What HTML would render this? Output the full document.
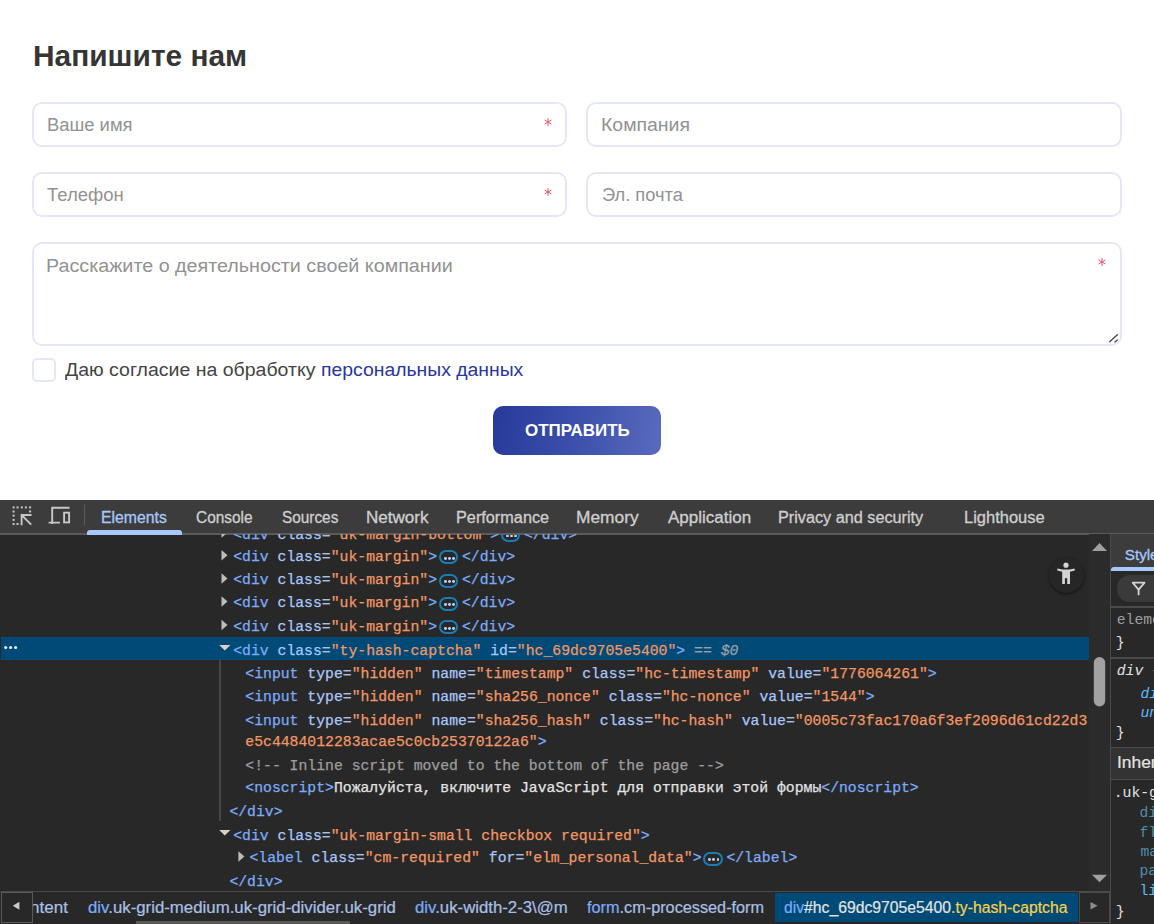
<!DOCTYPE html><html><head><meta charset="utf-8"><style>
*{margin:0;padding:0;box-sizing:content-box}
html,body{width:1154px;height:924px;overflow:hidden;background:#fff;position:relative}
.abs{position:absolute}
.box{position:absolute;border:2px solid #e5e7f6;border-radius:10px;background:#fff;box-sizing:border-box}
.ast{position:absolute}
.t{position:absolute;white-space:pre;line-height:1;transform-origin:0 0}
.code{position:absolute;white-space:pre;-webkit-text-stroke:0.25px currentColor;font-family:'Liberation Mono',monospace;font-size:14.78px;line-height:1;color:#a8c7fa}
.ell{display:inline-block;position:relative;width:19.6px;height:14.2px;border:2px solid #1a7db5;border-radius:7.5px;margin:0 3.6px 0 1.7px;vertical-align:-3.3px;box-sizing:border-box;-webkit-text-stroke:0}
.ell i{position:absolute;top:4.9px;width:2.9px;height:2.9px;border-radius:50%;background:#bcd2f8}
.ell i:nth-child(1){left:3.05px}.ell i:nth-child(2){left:7.25px}.ell i:nth-child(3){left:11.35px}
</style></head><body>
<div class="box" style="left:32px;top:102px;width:535px;height:45px"></div>
<div class="box" style="left:586px;top:102px;width:536px;height:45px"></div>
<div class="box" style="left:32px;top:172px;width:535px;height:45px"></div>
<div class="box" style="left:586px;top:172px;width:536px;height:45px"></div>
<div class="box" style="left:32px;top:242px;width:1090px;height:104px"></div>
<svg class="ast" style="left:542.7px;top:117px" width="10" height="10" viewBox="0 0 10 10"><g stroke="#e24a58" stroke-width="0.9" stroke-linecap="round"><line x1="5" y1="1.4" x2="5" y2="8.6"/><line x1="1.9" y1="3.2" x2="8.1" y2="6.8"/><line x1="1.9" y1="6.8" x2="8.1" y2="3.2"/></g></svg>
<svg class="ast" style="left:542.7px;top:187px" width="10" height="10" viewBox="0 0 10 10"><g stroke="#e24a58" stroke-width="0.9" stroke-linecap="round"><line x1="5" y1="1.4" x2="5" y2="8.6"/><line x1="1.9" y1="3.2" x2="8.1" y2="6.8"/><line x1="1.9" y1="6.8" x2="8.1" y2="3.2"/></g></svg>
<svg class="ast" style="left:1096.6px;top:257.3px" width="10" height="10" viewBox="0 0 10 10"><g stroke="#e24a58" stroke-width="0.9" stroke-linecap="round"><line x1="5" y1="1.4" x2="5" y2="8.6"/><line x1="1.9" y1="3.2" x2="8.1" y2="6.8"/><line x1="1.9" y1="6.8" x2="8.1" y2="3.2"/></g></svg>
<svg class="abs" style="left:1106px;top:332px" width="14" height="12" viewBox="0 0 14 12"><g stroke="#444" stroke-width="1.3" stroke-linecap="round"><line x1="3.7" y1="9.8" x2="11.3" y2="2.7"/><line x1="8.9" y1="10" x2="11.3" y2="7.9"/></g></svg>
<div class="abs" style="left:32px;top:358px;width:20px;height:20px;border:2px solid #e5e7f6;border-radius:5px;background:#fff"></div>
<div class="abs" style="left:493px;top:406px;width:168px;height:49px;border-radius:10px;background:linear-gradient(100deg,#28399a 0%,#3f52ad 55%,#5a6bbd 100%)"></div>
<div class="abs" style="left:0;top:500px;width:1154px;height:424px;background:#282828"></div>
<div class="abs" style="left:0;top:500px;width:1154px;height:33px;background:#3c3c3c"></div>
<div class="abs" style="left:0;top:533px;width:1154px;height:1.7px;background:#5b5b5b"></div>
<svg class="abs" style="left:0;top:500px" width="100" height="34" viewBox="0 500 100 34"><rect x="12.6" y="506.4" width="2" height="2" fill="#c7c7c7"/><rect x="16.5" y="506.4" width="2" height="2" fill="#c7c7c7"/><rect x="20.8" y="506.4" width="2" height="2" fill="#c7c7c7"/><rect x="24.9" y="506.4" width="2" height="2" fill="#c7c7c7"/><rect x="29.1" y="506.4" width="2" height="2" fill="#c7c7c7"/><rect x="12.6" y="510.5" width="2" height="2" fill="#c7c7c7"/><rect x="29.1" y="510.5" width="2" height="2" fill="#c7c7c7"/><rect x="12.6" y="514.6" width="2" height="2" fill="#c7c7c7"/><rect x="12.6" y="518.9" width="2" height="2" fill="#c7c7c7"/><rect x="12.6" y="523" width="2" height="2" fill="#c7c7c7"/><rect x="16.5" y="523" width="2" height="2" fill="#c7c7c7"/><g stroke="#c7c7c7" stroke-width="1.9" fill="none" stroke-linecap="square"><path d="M21.6 515 H30.6 M21.6 515 V524.2 M21.8 515.2 L30.5 523.9"/><path d="M52.2 523 V507.8 H68.6 M49.6 522.6 H59"/><rect x="64.1" y="512.7" width="5" height="9.7" stroke-linecap="butt"/></g><rect x="84.1" y="504.5" width="1" height="21" fill="#5e5e5e"/></svg>
<div class="abs" style="left:87px;top:529.7px;width:95px;height:5px;background:#a8c7fa;border-radius:3px 3px 0 0"></div>
<div class="abs" style="left:1089px;top:534px;width:21px;height:357px;background:#2b2b2b"></div>
<svg class="abs" style="left:1089px;top:534px" width="21" height="357" viewBox="1089 534 21 357"><path d="M1092 551 L1099.5 543 L1107 551 Z" fill="#a0a0a0"/><rect x="1093.8" y="657" width="11.4" height="49.5" rx="5.7" fill="#a2a2a2"/><path d="M1092 874.7 L1107 874.7 L1099.5 882.3 Z" fill="#a0a0a0"/></svg>
<div class="abs" style="left:1110px;top:534px;width:1px;height:390px;background:#4a4a4a"></div>
<div class="abs" style="left:1111px;top:534px;width:43px;height:37px;background:#3c3c3c"></div>
<div class="abs" style="left:1111px;top:567px;width:43px;height:4px;background:#a8c7fa;border-radius:3px 0 0 0"></div>
<div class="abs" style="left:1117.4px;top:575.2px;width:60px;height:26.5px;background:#3a3a3a;border-radius:13px"></div>
<svg class="abs" style="left:1128px;top:578px" width="22" height="20" viewBox="1128 578 22 20"><path d="M1132.6 582.6 H1144.6 L1138.6 589.6 Z" fill="none" stroke="#d4d4d4" stroke-width="1.7" stroke-linejoin="round"/><path d="M1138.6 589 V594.4" stroke="#d4d4d4" stroke-width="1.8" stroke-linecap="round"/></svg>
<div class="abs" style="left:1111px;top:606px;width:43px;height:1.6px;background:#4a4a4a"></div>
<div class="abs" style="left:1111px;top:657px;width:43px;height:1.5px;background:#4a4a4a"></div>
<div class="abs" style="left:1111px;top:747px;width:43px;height:30.5px;background:#333333;border-top:1px solid #4a4a4a;border-bottom:1px solid #4a4a4a"></div>
<div class="abs" style="left:1048.5px;top:558px;width:35px;height:35px;border-radius:50%;background:#262626;box-shadow:0 1px 3px rgba(0,0,0,.6)"></div>
<svg class="abs" style="left:1050px;top:558px" width="32" height="32" viewBox="1050 558 32 32"><circle cx="1066" cy="565.2" r="2.6" fill="#d4d4d4"/><path d="M1057.4 568.6 L1062.3 569.6 H1069.8 L1074.6 568.6 L1074.8 570.6 L1070 571.8 V584 H1067.2 V578.2 H1064.9 V584 H1062.2 V571.8 L1057.3 570.6 Z" fill="#d4d4d4"/></svg>
<div class="abs" style="left:1px;top:636.7px;width:1088px;height:23.5px;background:#004a77"></div>
<svg class="abs" style="left:0;top:640px" width="24" height="16"><circle cx="5.7" cy="7.5" r="1.6" fill="#e8e8e8"/><circle cx="10.6" cy="7.5" r="1.6" fill="#e8e8e8"/><circle cx="15.6" cy="7.5" r="1.6" fill="#e8e8e8"/></svg>
<div class="abs" style="left:219.3px;top:660px;width:1.3px;height:161px;background:#474747"></div>
<div class="abs" style="left:0;top:534px;width:1089px;height:357px;overflow:hidden"><div class="code" style="left:233.20px;top:-6.41px"><span style="color:#7cacf8">&lt;div</span> <span style="color:#a8c7fa">class</span><span style="color:#a9bfe0">=</span><span style="color:#f29766">"uk-margin-bottom"</span><span style="color:#7cacf8">&gt;</span><span class="ell"><i></i><i></i><i></i></span><span style="color:#7cacf8">&lt;/div&gt;</span></div><div class="code" style="left:233.20px;top:16.19px"><span style="color:#7cacf8">&lt;div</span> <span style="color:#a8c7fa">class</span><span style="color:#a9bfe0">=</span><span style="color:#f29766">"uk-margin"</span><span style="color:#7cacf8">&gt;</span><span class="ell"><i></i><i></i><i></i></span><span style="color:#7cacf8">&lt;/div&gt;</span></div><div class="code" style="left:233.20px;top:39.49px"><span style="color:#7cacf8">&lt;div</span> <span style="color:#a8c7fa">class</span><span style="color:#a9bfe0">=</span><span style="color:#f29766">"uk-margin"</span><span style="color:#7cacf8">&gt;</span><span class="ell"><i></i><i></i><i></i></span><span style="color:#7cacf8">&lt;/div&gt;</span></div><div class="code" style="left:233.20px;top:62.49px"><span style="color:#7cacf8">&lt;div</span> <span style="color:#a8c7fa">class</span><span style="color:#a9bfe0">=</span><span style="color:#f29766">"uk-margin"</span><span style="color:#7cacf8">&gt;</span><span class="ell"><i></i><i></i><i></i></span><span style="color:#7cacf8">&lt;/div&gt;</span></div><div class="code" style="left:233.20px;top:85.99px"><span style="color:#7cacf8">&lt;div</span> <span style="color:#a8c7fa">class</span><span style="color:#a9bfe0">=</span><span style="color:#f29766">"uk-margin"</span><span style="color:#7cacf8">&gt;</span><span class="ell"><i></i><i></i><i></i></span><span style="color:#7cacf8">&lt;/div&gt;</span></div><div class="code" style="left:233.20px;top:109.69px"><span style="color:#7cacf8">&lt;div</span> <span style="color:#a8c7fa">class</span><span style="color:#a9bfe0">=</span><span style="color:#f29766">"ty-hash-captcha"</span> <span style="color:#a8c7fa">id</span><span style="color:#a9bfe0">=</span><span style="color:#f29766">"hc_69dc9705e5400"</span><span style="color:#7cacf8">&gt;</span><span style="color:#9aa0a6;font-style:italic"> == $0</span></div><div class="code" style="left:245.30px;top:132.79px"><span style="color:#7cacf8">&lt;input</span> <span style="color:#a8c7fa">type</span><span style="color:#a9bfe0">=</span><span style="color:#f29766">"hidden"</span> <span style="color:#a8c7fa">name</span><span style="color:#a9bfe0">=</span><span style="color:#f29766">"timestamp"</span> <span style="color:#a8c7fa">class</span><span style="color:#a9bfe0">=</span><span style="color:#f29766">"hc-timestamp"</span> <span style="color:#a8c7fa">value</span><span style="color:#a9bfe0">=</span><span style="color:#f29766">"1776064261"</span><span style="color:#7cacf8">&gt;</span></div><div class="code" style="left:245.30px;top:155.99px"><span style="color:#7cacf8">&lt;input</span> <span style="color:#a8c7fa">type</span><span style="color:#a9bfe0">=</span><span style="color:#f29766">"hidden"</span> <span style="color:#a8c7fa">name</span><span style="color:#a9bfe0">=</span><span style="color:#f29766">"sha256_nonce"</span> <span style="color:#a8c7fa">class</span><span style="color:#a9bfe0">=</span><span style="color:#f29766">"hc-nonce"</span> <span style="color:#a8c7fa">value</span><span style="color:#a9bfe0">=</span><span style="color:#f29766">"1544"</span><span style="color:#7cacf8">&gt;</span></div><div class="code" style="left:245.30px;top:179.79px"><span style="color:#7cacf8">&lt;input</span> <span style="color:#a8c7fa">type</span><span style="color:#a9bfe0">=</span><span style="color:#f29766">"hidden"</span> <span style="color:#a8c7fa">name</span><span style="color:#a9bfe0">=</span><span style="color:#f29766">"sha256_hash"</span> <span style="color:#a8c7fa">class</span><span style="color:#a9bfe0">=</span><span style="color:#f29766">"hc-hash"</span> <span style="color:#a8c7fa">value</span><span style="color:#a9bfe0">=</span><span style="color:#f29766">"0005c73fac170a6f3ef2096d61cd22d3</span></div><div class="code" style="left:245.30px;top:201.39px"><span style="color:#f29766">e5c4484012283acae5c0cb25370122a6"</span><span style="color:#7cacf8">&gt;</span></div><div class="code" style="left:245.30px;top:224.59px"><span style="color:#9e9e9e">&lt;!-- Inline script moved to the bottom of the page --&gt;</span></div><div class="code" style="left:245.30px;top:247.29px"><span style="color:#7cacf8">&lt;noscript&gt;</span><span style="color:#e3e3e3">Пожалуйста, включите JavaScript для отправки этой формы</span><span style="color:#7cacf8">&lt;/noscript&gt;</span></div><div class="code" style="left:229.40px;top:271.19px"><span style="color:#7cacf8">&lt;/div&gt;</span></div><div class="code" style="left:233.20px;top:294.69px"><span style="color:#7cacf8">&lt;div</span> <span style="color:#a8c7fa">class</span><span style="color:#a9bfe0">=</span><span style="color:#f29766">"uk-margin-small checkbox required"</span><span style="color:#7cacf8">&gt;</span></div><div class="code" style="left:249.50px;top:317.49px"><span style="color:#7cacf8">&lt;label</span> <span style="color:#a8c7fa">class</span><span style="color:#a9bfe0">=</span><span style="color:#f29766">"cm-required"</span> <span style="color:#a8c7fa">for</span><span style="color:#a9bfe0">=</span><span style="color:#f29766">"elm_personal_data"</span><span style="color:#7cacf8">&gt;</span><span class="ell"><i></i><i></i><i></i></span><span style="color:#7cacf8">&lt;/label&gt;</span></div><div class="code" style="left:229.40px;top:341.09px"><span style="color:#7cacf8">&lt;/div&gt;</span></div></div>
<svg class="abs" style="left:0;top:534px" width="260" height="357" viewBox="0 534 260 357"><path d="M221.5 527.40 L227.5 532.60 L221.5 537.80 Z" fill="#bdbdbd"/><path d="M221.5 550.00 L227.5 555.20 L221.5 560.40 Z" fill="#bdbdbd"/><path d="M221.5 573.30 L227.5 578.50 L221.5 583.70 Z" fill="#bdbdbd"/><path d="M221.5 596.30 L227.5 601.50 L221.5 606.70 Z" fill="#bdbdbd"/><path d="M221.5 619.80 L227.5 625.00 L221.5 630.20 Z" fill="#bdbdbd"/><path d="M238.4 851.30 L244.4 856.50 L238.4 861.70 Z" fill="#bdbdbd"/><path d="M219.2 644.90 L230.4 644.90 L224.8 650.50 Z" fill="#d9d0c8"/><path d="M219.2 829.90 L230.4 829.90 L224.8 835.50 Z" fill="#d9d0c8"/></svg>
<div class="abs" style="left:0;top:891px;width:1110px;height:1px;background:#4a4a4a;z-index:2"></div>
<div class="abs" style="left:0;top:892px;width:1110px;height:32px;background:#282828;z-index:1"></div>
<div class="abs" style="left:774.5px;top:892.5px;width:303px;height:29px;background:#004a77;z-index:2"></div>
<div class="abs" style="left:0.5px;top:891.5px;width:30px;height:29px;border:1px solid #5a5a5a;background:#282828;z-index:4"></div>
<svg class="abs" style="left:0;top:891px;z-index:5" width="32" height="32"><path d="M12.7 14.8 L19.4 10.8 L19.4 18.7 Z" fill="#c9c9c9"/></svg>
<div class="abs" style="left:1079.2px;top:891.5px;width:29px;height:29px;border:1px solid #4a4a4a;background:#282828;z-index:4"></div>
<svg class="abs" style="left:1079px;top:891px;z-index:5" width="32" height="32"><path d="M11.5 11 L18.5 14.8 L11.5 18.6 Z" fill="#8e8e8e"/></svg>
<div class="abs" style="left:136px;top:920.5px;width:214px;height:3.5px;background:#5a5a5a;z-index:2"></div>
<div class="t" id="t0" style="left:32.97px;top:41.84px;font-family:'Liberation Sans', sans-serif;font-size:29px;font-weight:700;color:#353535;transform:scaleX(1.0304);">Напишите нам</div>
<div class="t" id="t1" style="left:47.18px;top:116.01px;font-family:'Liberation Sans', sans-serif;font-size:18px;font-weight:400;color:#929292;transform:scaleX(1.0220);">Ваше имя</div>
<div class="t" id="t2" style="left:600.82px;top:116.01px;font-family:'Liberation Sans', sans-serif;font-size:18px;font-weight:400;color:#929292;transform:scaleX(1.0803);">Компания</div>
<div class="t" id="t3" style="left:47.40px;top:186.01px;font-family:'Liberation Sans', sans-serif;font-size:18px;font-weight:400;color:#929292;transform:scaleX(1.0281);">Телефон</div>
<div class="t" id="t4" style="left:601.90px;top:186.01px;font-family:'Liberation Sans', sans-serif;font-size:18px;font-weight:400;color:#929292;transform:scaleX(1.0158);">Эл. почта</div>
<div class="t" id="t5" style="left:46.40px;top:257.01px;font-family:'Liberation Sans', sans-serif;font-size:18px;font-weight:400;color:#929292;transform:scaleX(1.0951);">Расскажите о деятельности своей компании</div>
<div class="t" id="t6" style="left:65.30px;top:361.01px;font-family:'Liberation Sans', sans-serif;font-size:18px;font-weight:400;color:#444444;transform:scaleX(1.0830);">Даю согласие на обработку</div>
<div class="t" id="t7" style="left:321.32px;top:361.01px;font-family:'Liberation Sans', sans-serif;font-size:18px;font-weight:400;color:#2a36a0;transform:scaleX(1.0758);">персональных данных</div>
<div class="t" id="t8" style="left:524.70px;top:421.84px;font-family:'Liberation Sans', sans-serif;font-size:17px;font-weight:700;color:#ffffff;transform:scaleX(0.9978);">ОТПРАВИТЬ</div>
<div class="t" id="t9" style="left:100.70px;top:510.04px;font-family:'Liberation Sans', sans-serif;font-size:15.8px;font-weight:400;color:#a8c7fa;transform:scaleX(0.9992);-webkit-text-stroke:0.3px currentColor;">Elements</div>
<div class="t" id="t10" style="left:195.90px;top:510.04px;font-family:'Liberation Sans', sans-serif;font-size:15.8px;font-weight:400;color:#cfcfcf;transform:scaleX(0.9764);-webkit-text-stroke:0.3px currentColor;">Console</div>
<div class="t" id="t11" style="left:281.50px;top:510.04px;font-family:'Liberation Sans', sans-serif;font-size:15.8px;font-weight:400;color:#cfcfcf;transform:scaleX(0.9715);-webkit-text-stroke:0.3px currentColor;">Sources</div>
<div class="t" id="t12" style="left:365.82px;top:510.04px;font-family:'Liberation Sans', sans-serif;font-size:15.8px;font-weight:400;color:#cfcfcf;transform:scaleX(1.0800);-webkit-text-stroke:0.3px currentColor;">Network</div>
<div class="t" id="t13" style="left:455.57px;top:510.04px;font-family:'Liberation Sans', sans-serif;font-size:15.8px;font-weight:400;color:#cfcfcf;transform:scaleX(1.0296);-webkit-text-stroke:0.3px currentColor;">Performance</div>
<div class="t" id="t14" style="left:576.30px;top:510.04px;font-family:'Liberation Sans', sans-serif;font-size:15.8px;font-weight:400;color:#cfcfcf;transform:scaleX(1.0971);-webkit-text-stroke:0.3px currentColor;">Memory</div>
<div class="t" id="t15" style="left:667.70px;top:510.04px;font-family:'Liberation Sans', sans-serif;font-size:15.8px;font-weight:400;color:#cfcfcf;transform:scaleX(1.0772);-webkit-text-stroke:0.3px currentColor;">Application</div>
<div class="t" id="t16" style="left:778.17px;top:510.04px;font-family:'Liberation Sans', sans-serif;font-size:15.8px;font-weight:400;color:#cfcfcf;transform:scaleX(1.0274);-webkit-text-stroke:0.3px currentColor;">Privacy and security</div>
<div class="t" id="t17" style="left:963.96px;top:510.04px;font-family:'Liberation Sans', sans-serif;font-size:15.8px;font-weight:400;color:#cfcfcf;transform:scaleX(1.0430);-webkit-text-stroke:0.3px currentColor;">Lighthouse</div>
<div class="t" id="t18" style="left:1124.80px;top:546.94px;font-family:'Liberation Sans', sans-serif;font-size:15.2px;font-weight:400;color:#a8c7fa;-webkit-text-stroke:0.3px currentColor;">Styles</div>
<div class="t" id="t19" style="left:1116.70px;top:613.40px;font-family:'Liberation Mono', monospace;font-size:14.76px;font-weight:400;color:#9e9e9e;">element.style {</div>
<div class="t" id="t20" style="left:1115.70px;top:636.30px;font-family:'Liberation Mono', monospace;font-size:14.76px;font-weight:400;color:#e3e3e3;">}</div>
<div class="t" id="t21" style="left:1116.70px;top:664.00px;font-family:'Liberation Mono', monospace;font-size:14.76px;font-weight:400;color:#e3e3e3;font-style:italic;">div {</div>
<div class="t" id="t22" style="left:1140.50px;top:686.50px;font-family:'Liberation Mono', monospace;font-size:14.76px;font-weight:400;color:#5cbcf8;font-style:italic;">display: block;</div>
<div class="t" id="t23" style="left:1140.50px;top:706.00px;font-family:'Liberation Mono', monospace;font-size:14.76px;font-weight:400;color:#5cbcf8;font-style:italic;">unicode-bidi: isolate;</div>
<div class="t" id="t24" style="left:1115.70px;top:725.50px;font-family:'Liberation Mono', monospace;font-size:14.76px;font-weight:400;color:#e3e3e3;">}</div>
<div class="t" id="t25" style="left:1117.00px;top:755.44px;font-family:'Liberation Sans', sans-serif;font-size:15.8px;font-weight:400;color:#e3e3e3;-webkit-text-stroke:0.2px currentColor;transform:scaleX(1.1);">Inherited from</div>
<div class="t" id="t26" style="left:1113.70px;top:786.00px;font-family:'Liberation Mono', monospace;font-size:14.76px;font-weight:400;color:#e3e3e3;">.uk-grid {</div>
<div class="t" id="t27" style="left:1139.50px;top:806.40px;font-family:'Liberation Mono', monospace;font-size:14.76px;font-weight:400;color:#4f8ea6;">display: flex;</div>
<div class="t" id="t28" style="left:1139.50px;top:825.70px;font-family:'Liberation Mono', monospace;font-size:14.76px;font-weight:400;color:#4f8ea6;">flex-wrap: wrap;</div>
<div class="t" id="t29" style="left:1140.50px;top:845.00px;font-family:'Liberation Mono', monospace;font-size:14.76px;font-weight:400;color:#4f8ea6;">margin: 0;</div>
<div class="t" id="t30" style="left:1139.50px;top:864.30px;font-family:'Liberation Mono', monospace;font-size:14.76px;font-weight:400;color:#4f8ea6;">padding: 0;</div>
<div class="t" id="t31" style="left:1139.50px;top:883.60px;font-family:'Liberation Mono', monospace;font-size:14.76px;font-weight:400;color:#5cbcf8;">list-style: none;</div>
<div class="t" id="t32" style="left:1115.70px;top:904.50px;font-family:'Liberation Mono', monospace;font-size:14.76px;font-weight:400;color:#e3e3e3;">}</div>
<div class="t" id="t33" style="left:30.00px;top:899.84px;font-family:'Liberation Sans', sans-serif;font-size:15.8px;font-weight:400;color:#a9c0e6;z-index:3;-webkit-text-stroke:0.2px currentColor;transform:scaleX(1.08);"><span style="color:#a9c0e6">ntent</span></div>
<div class="t" id="t34" style="left:87.80px;top:899.84px;font-family:'Liberation Sans', sans-serif;font-size:15.8px;font-weight:400;color:#a9c0e6;transform:scaleX(1.0637);z-index:3;-webkit-text-stroke:0.2px currentColor;"><span style="color:#7cacf8">div</span>.uk-grid-medium.uk-grid-divider.uk-grid</div>
<div class="t" id="t35" style="left:414.80px;top:899.84px;font-family:'Liberation Sans', sans-serif;font-size:15.8px;font-weight:400;color:#a9c0e6;transform:scaleX(1.0609);z-index:3;-webkit-text-stroke:0.2px currentColor;"><span style="color:#7cacf8">div</span>.uk-width-2-3\@m</div>
<div class="t" id="t36" style="left:587.00px;top:899.84px;font-family:'Liberation Sans', sans-serif;font-size:15.8px;font-weight:400;color:#a9c0e6;transform:scaleX(1.0292);z-index:3;-webkit-text-stroke:0.2px currentColor;"><span style="color:#7cacf8">form</span>.cm-processed-form</div>
<div class="t" id="t37" style="left:784.00px;top:899.84px;font-family:'Liberation Sans', sans-serif;font-size:15.8px;font-weight:400;color:#a9c0e6;transform:scaleX(0.9959);z-index:3;-webkit-text-stroke:0.2px currentColor;"><span style="color:#7cacf8">div</span><span style="color:#e3e3e3">#hc_69dc9705e5400</span><span style="color:#f6d24a">.ty-hash-captcha</span></div>
</body></html>
